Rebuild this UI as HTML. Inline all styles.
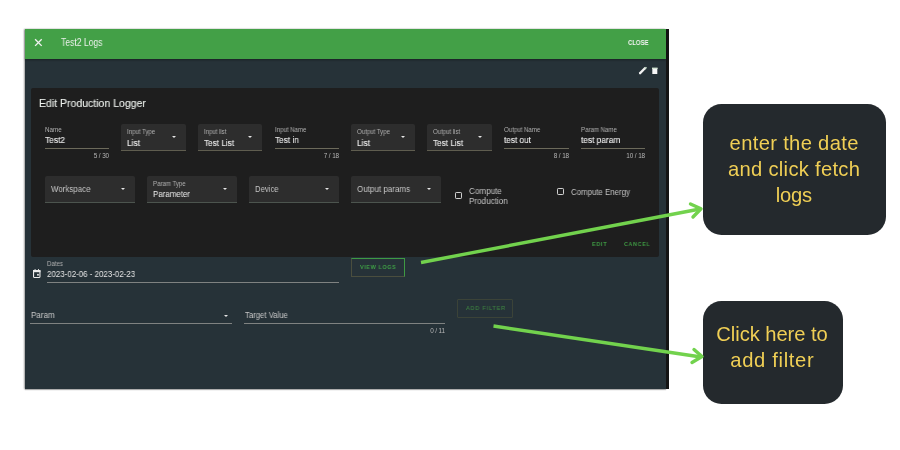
<!DOCTYPE html>
<html><head><meta charset="utf-8">
<style>
html,body{margin:0;padding:0;width:900px;height:450px;overflow:hidden;background:#fff;font-family:"Liberation Sans",sans-serif;}
.a{position:absolute;}
.t{position:absolute;white-space:nowrap;line-height:1;will-change:transform;}
#dlg{left:25px;top:29px;width:641px;height:360.4px;background:#263238;box-shadow:-1px 0 1.5px rgba(0,0,0,0.35),0 1px 1px rgba(0,0,0,0.25);}
#strip{left:666px;top:29px;width:3px;height:360.4px;background:#141414;}
#hdr{left:25px;top:29px;width:641px;height:30px;background:#43a047;box-shadow:0 1px 2px rgba(0,0,0,0.35);}
#card{left:31px;top:88px;width:628px;height:169px;background:#1e1e1e;border-radius:2px;}
.sel{position:absolute;background:#2d2d2d;border-radius:2px 2px 0 0;border-bottom:1px solid #5f5d4f;box-sizing:border-box;}
.ul{position:absolute;height:1px;background:#6c6a5b;}
.arr{position:absolute;width:0;height:0;border-left:2px solid transparent;border-right:2px solid transparent;border-top:2.5px solid #e6e6e6;}
.btn{position:absolute;box-sizing:border-box;}
.note{position:absolute;background:#24292d;border-radius:18.5px;}
</style></head><body>
<div id="dlg" class="a"></div>
<div id="strip" class="a"></div>
<div id="hdr" class="a"></div>
<svg class="a" style="left:33px;top:38px" width="11" height="10" viewBox="0 0 11 10"><path d="M2.1 1.2 L8.7 7.9 M8.7 1.2 L2.1 7.9" stroke="#f2f2f2" stroke-width="1.35" fill="none"/></svg>

<div class="t" style="left:61px;top:38px;font-size:10.4px;color:#e8efe8;transform:scaleX(0.8261);transform-origin:0 0;">Test2 Logs</div>
<div class="t" style="left:627.5px;top:39px;font-size:7px;color:#f4f4f4;letter-spacing:0.02em;transform:scaleX(0.8300);transform-origin:0 0;font-weight:bold;">CLOSE</div>
<svg class="a" style="left:636px;top:64px" width="24" height="14" viewBox="0 0 24 14"><path d="M3.6 9.6 L9.4 3.8" stroke="#f2f2f2" stroke-width="2.3" stroke-linecap="butt"/><path d="M2.9 10.3 L3.3 8.4 L4.8 9.9 Z" fill="#f2f2f2"/><path d="M9.1 3.5 L10.2 4.6" stroke="#cfe3cf" stroke-width="2.3"/><rect x="16.3" y="4.2" width="5" height="5.8" fill="#f7f7f7"/><rect x="16" y="3.6" width="5.6" height="1.4" fill="#d3e3d3"/></svg>
<div id="card" class="a"></div>

<div class="t" style="left:38.7px;top:97.5px;font-size:11px;color:#eef2ee;-webkit-text-stroke:0.1px #eef2ee;transform:scaleX(0.9549);transform-origin:0 0;">Edit Production Logger</div>
<div class="t" style="left:44.5px;top:126.5px;font-size:6.3px;color:#b0b0b0;transform:scaleX(0.9775);transform-origin:0 0;">Name</div>
<div class="t" style="left:44.5px;top:136.0px;font-size:9.2px;color:#ededed;-webkit-text-stroke:0.12px #ededed;transform:scaleX(0.9162);transform-origin:0 0;">Test2</div>
<div class="ul" style="left:44.5px;top:148px;width:64.5px;"></div>
<div class="t" style="left:9.0px;width:100px;text-align:right;top:152.5px;font-size:6.4px;color:#b5b5b5;letter-spacing:-0.02em;">5 / 30</div>
<div class="sel" style="left:121px;top:124px;width:65px;height:27px;"></div>
<div class="t" style="left:127px;top:128.5px;font-size:6.3px;color:#b0b0b0;transform:scaleX(0.9613);transform-origin:0 0;">Input Type</div>
<div class="t" style="left:127px;top:138.5px;font-size:9.2px;color:#ededed;-webkit-text-stroke:0.12px #ededed;transform:scaleX(0.9036);transform-origin:0 0;">List</div>
<div class="arr" style="left:171.5px;top:136px;border-top-color:#e6e6e6"></div>
<div class="sel" style="left:198px;top:124px;width:64px;height:27px;"></div>
<div class="t" style="left:204px;top:128.5px;font-size:6.3px;color:#b0b0b0;transform:scaleX(0.9516);transform-origin:0 0;">Input list</div>
<div class="t" style="left:204px;top:138.5px;font-size:9.2px;color:#ededed;-webkit-text-stroke:0.12px #ededed;transform:scaleX(0.8908);transform-origin:0 0;">Test List</div>
<div class="arr" style="left:248px;top:136px;border-top-color:#e6e6e6"></div>
<div class="t" style="left:274.5px;top:126.5px;font-size:6.3px;color:#b0b0b0;transform:scaleX(0.9652);transform-origin:0 0;">Input Name</div>
<div class="t" style="left:274.5px;top:136.0px;font-size:9.2px;color:#ededed;-webkit-text-stroke:0.12px #ededed;transform:scaleX(0.8961);transform-origin:0 0;">Test in</div>
<div class="ul" style="left:274.5px;top:148px;width:64.5px;"></div>
<div class="t" style="left:239.0px;width:100px;text-align:right;top:152.5px;font-size:6.4px;color:#b5b5b5;letter-spacing:-0.02em;">7 / 18</div>
<div class="sel" style="left:351px;top:124px;width:64px;height:27px;"></div>
<div class="t" style="left:357px;top:128.5px;font-size:6.3px;color:#b0b0b0;transform:scaleX(0.9632);transform-origin:0 0;">Output Type</div>
<div class="t" style="left:357px;top:138.5px;font-size:9.2px;color:#ededed;-webkit-text-stroke:0.12px #ededed;transform:scaleX(0.9036);transform-origin:0 0;">List</div>
<div class="arr" style="left:401px;top:136px;border-top-color:#e6e6e6"></div>
<div class="sel" style="left:427px;top:124px;width:65px;height:27px;"></div>
<div class="t" style="left:433px;top:128.5px;font-size:6.3px;color:#b0b0b0;transform:scaleX(0.9556);transform-origin:0 0;">Output list</div>
<div class="t" style="left:433px;top:138.5px;font-size:9.2px;color:#ededed;-webkit-text-stroke:0.12px #ededed;transform:scaleX(0.8908);transform-origin:0 0;">Test List</div>
<div class="arr" style="left:477.5px;top:136px;border-top-color:#e6e6e6"></div>
<div class="t" style="left:504px;top:126.5px;font-size:6.3px;color:#b0b0b0;transform:scaleX(0.9664);transform-origin:0 0;">Output Name</div>
<div class="t" style="left:504px;top:136.0px;font-size:9.2px;color:#ededed;-webkit-text-stroke:0.12px #ededed;transform:scaleX(0.8932);transform-origin:0 0;">test out</div>
<div class="ul" style="left:504px;top:148px;width:64.5px;"></div>
<div class="t" style="left:468.5px;width:100px;text-align:right;top:152.5px;font-size:6.4px;color:#b5b5b5;letter-spacing:-0.02em;">8 / 18</div>
<div class="t" style="left:580.5px;top:126.5px;font-size:6.3px;color:#b0b0b0;transform:scaleX(0.9694);transform-origin:0 0;">Param Name</div>
<div class="t" style="left:580.5px;top:136.0px;font-size:9.2px;color:#ededed;-webkit-text-stroke:0.12px #ededed;transform:scaleX(0.9046);transform-origin:0 0;">test param</div>
<div class="ul" style="left:580.5px;top:148px;width:64.5px;"></div>
<div class="t" style="left:545.0px;width:100px;text-align:right;top:152.5px;font-size:6.4px;color:#b5b5b5;letter-spacing:-0.02em;">10 / 18</div>
<div class="sel" style="left:44.5px;top:176px;width:90px;height:27px;border-bottom-color:#4c544e;"></div>
<div class="t" style="left:50.5px;top:184.5px;font-size:9.2px;color:#c4c4c4;transform:scaleX(0.8634);transform-origin:0 0;">Workspace</div>
<div class="arr" style="left:120.5px;top:187.5px;border-top-color:#e6e6e6"></div>
<div class="sel" style="left:147px;top:176px;width:90px;height:27px;border-bottom-color:#4c544e;"></div>
<div class="t" style="left:152.5px;top:180.5px;font-size:6.3px;color:#b0b0b0;transform:scaleX(0.9665);transform-origin:0 0;">Param Type</div>
<div class="t" style="left:152.5px;top:190px;font-size:9.2px;color:#ededed;transform:scaleX(0.8628);transform-origin:0 0;">Parameter</div>
<div class="arr" style="left:222.5px;top:187.5px;border-top-color:#e6e6e6"></div>
<div class="sel" style="left:249px;top:176px;width:90px;height:27px;border-bottom-color:#4c544e;"></div>
<div class="t" style="left:255px;top:184.5px;font-size:9.2px;color:#c4c4c4;transform:scaleX(0.8363);transform-origin:0 0;">Device</div>
<div class="arr" style="left:324.5px;top:187.5px;border-top-color:#e6e6e6"></div>
<div class="sel" style="left:351px;top:176px;width:89.5px;height:27px;border-bottom-color:#4c544e;"></div>
<div class="t" style="left:357px;top:184.5px;font-size:9.2px;color:#c4c4c4;transform:scaleX(0.8729);transform-origin:0 0;">Output params</div>
<div class="arr" style="left:426.5px;top:187.5px;border-top-color:#e6e6e6"></div>
<div class="a" style="left:455px;top:192px;width:7.4px;height:7.4px;box-sizing:border-box;border:1.6px solid #d0d0d0;border-radius:1.2px;"></div>
<div class="t" style="left:469px;top:187.0px;font-size:8.6px;color:#c4c4c4;transform:scaleX(0.9435);transform-origin:0 0;line-height:9.8px;">Compute<br>Production</div>
<div class="a" style="left:557px;top:188px;width:7.4px;height:7.4px;box-sizing:border-box;border:1.6px solid #d0d0d0;border-radius:1.2px;"></div>
<div class="t" style="left:571px;top:188px;font-size:8.6px;color:#c4c4c4;transform:scaleX(0.9133);transform-origin:0 0;">Compute Energy</div>
<div class="t" style="left:592.2px;top:241px;font-size:6px;color:#3f9a44;letter-spacing:0.12em;transform:scaleX(0.9200);transform-origin:0 0;font-weight:bold;">EDIT</div>
<div class="t" style="left:624px;top:241px;font-size:6px;color:#3f9a44;letter-spacing:0.12em;transform:scaleX(0.9000);transform-origin:0 0;font-weight:bold;">CANCEL</div>
<svg class="a" style="left:32px;top:268px" width="10" height="11" viewBox="0 0 10 11"><rect x="1.55" y="2.55" width="6.4" height="6.9" rx="0.6" fill="none" stroke="#ececec" stroke-width="1.1"/><rect x="1" y="2" width="7.5" height="2.2" fill="#ececec"/><rect x="2.6" y="1.1" width="1" height="1.4" fill="#ececec"/><rect x="6" y="1.1" width="1" height="1.4" fill="#ececec"/><rect x="5.1" y="5.9" width="1.7" height="1.7" fill="#ececec"/></svg>
<div class="t" style="left:47px;top:260.5px;font-size:6.3px;color:#b0b0b0;transform:scaleX(0.9694);transform-origin:0 0;">Dates</div>
<div class="t" style="left:46.7px;top:270px;font-size:8.8px;color:#e6e6e6;transform:scaleX(0.9011);transform-origin:0 0;">2023-02-06 - 2023-02-23</div>
<div class="ul" style="left:47px;top:282px;width:292px;background:#7f8281;"></div>
<div class="btn" style="left:351px;top:258px;width:54px;height:19px;border:1px solid #4a4e3e;border-top-color:#3e9a43;border-right-color:#3e9a43;"></div>
<div class="t" style="left:359.5px;top:264.5px;font-size:5.8px;color:#3fa046;letter-spacing:0.12em;transform:scaleX(0.9300);transform-origin:0 0;font-weight:bold;">VIEW LOGS</div>
<div class="t" style="left:30.5px;top:311px;font-size:8.8px;color:#c8c8c8;transform:scaleX(0.9185);transform-origin:0 0;">Param</div>
<div class="arr" style="left:224px;top:314.5px;border-top-color:#e6e6e6"></div>
<div class="ul" style="left:30px;top:323px;width:202px;background:#7f8281;"></div>
<div class="t" style="left:244.5px;top:311px;font-size:8.8px;color:#c8c8c8;transform:scaleX(0.8809);transform-origin:0 0;">Target Value</div>
<div class="ul" style="left:244px;top:323px;width:201px;background:#7f8281;"></div>
<div class="t" style="left:345px;width:100px;text-align:right;top:327.5px;font-size:6.4px;color:#b5b5b5;letter-spacing:-0.02em;">0 / 11</div>
<div class="btn" style="left:457px;top:299px;width:56px;height:19px;border:1px solid #3b4338;border-radius:1px;"></div>
<div class="t" style="left:466.3px;top:304.8px;font-size:6.2px;color:#3e8042;letter-spacing:0.14em;transform:scaleX(0.9000);transform-origin:0 0;-webkit-text-stroke:0.1px #3e8042;">ADD FILTER</div>
<div class="note" style="left:703px;top:104.3px;width:183px;height:130.4px;"></div>
<div class="note" style="left:703.3px;top:301.3px;width:140px;height:102.7px;"></div>
<div class="t" style="left:694px;width:200px;text-align:center;top:133.20px;font-size:20.2px;color:#f0cf55;letter-spacing:0.016em;text-indent:0.32px;">enter the date</div>
<div class="t" style="left:694px;width:200px;text-align:center;top:158.80px;font-size:20.2px;color:#f0cf55;letter-spacing:0.014em;text-indent:0.28px;">and click fetch</div>
<div class="t" style="left:694.3px;width:200px;text-align:center;top:185.20px;font-size:20.2px;color:#f0cf55;letter-spacing:-0.012em;text-indent:-0.24px;">logs</div>
<div class="t" style="left:671.8px;width:200px;text-align:center;top:324.40px;font-size:20.2px;color:#f0cf55;letter-spacing:-0.003em;text-indent:-0.06px;">Click here to</div>
<div class="t" style="left:671.8px;width:200px;text-align:center;top:350.10px;font-size:20.2px;color:#f0cf55;letter-spacing:0.033em;text-indent:0.67px;">add filter</div>
<svg class="a" style="left:0;top:0" width="900" height="450" viewBox="0 0 900 450">
<g stroke="#72d24d" stroke-width="3.4" fill="none" stroke-linejoin="round">
<path d="M421 262.5 L700 209" stroke-linecap="butt"/>
<path d="M690.5 204 L701 208.7 L693 217" stroke-linecap="round"/>
<path d="M493.5 326 L701 357" stroke-linecap="butt"/>
<path d="M694 349.5 L702 356.5 L692 362.5" stroke-linecap="round"/>
</g>
</svg>
</body></html>
